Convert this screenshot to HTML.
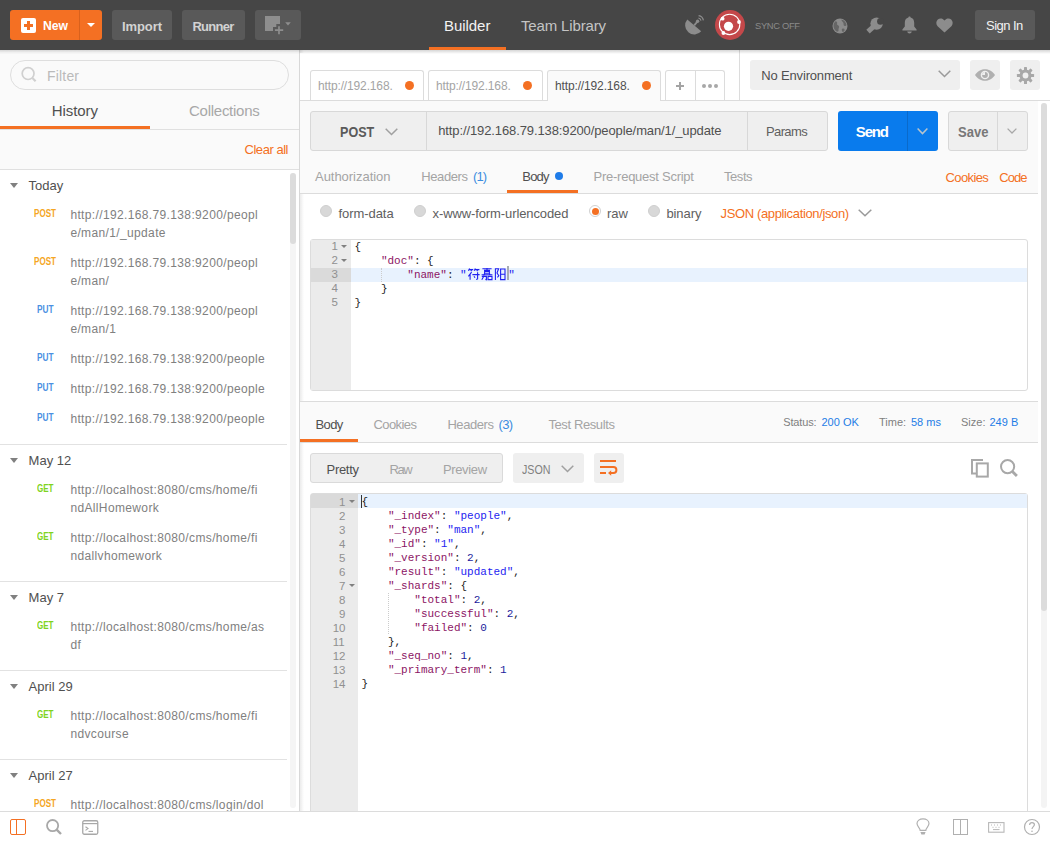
<!DOCTYPE html>
<html><head><meta charset="utf-8">
<style>
*{box-sizing:border-box;margin:0;padding:0}
html,body{width:1050px;height:842px;overflow:hidden;background:#fff}
body{position:relative;font-family:"Liberation Sans",sans-serif;color:#505050}
.a{position:absolute}
.t{position:absolute;white-space:pre;line-height:1}
svg{position:absolute;overflow:visible}
</style></head><body>
<div class="a" style="left:0px;top:0px;width:1050px;height:50px;background:#464646"></div>
<div class="a" style="left:10px;top:10px;width:92px;height:30px;background:#f47023;border-radius:3px"></div>
<div class="a" style="left:79px;top:10px;width:1px;height:30px;background:#d9611c"></div>
<div class="a" style="left:21px;top:18px;width:15px;height:15px;background:#fff;border-radius:2px"></div>
<div class="a" style="left:27.3px;top:21px;width:2.4px;height:9px;background:#f47023"></div>
<div class="a" style="left:24px;top:24.3px;width:9px;height:2.4px;background:#f47023"></div>
<div class="t" style="left:43.4px;top:19.00px;font-size:13px;color:#fff;font-weight:bold;transform:scaleX(0.935);transform-origin:0 0">New</div>
<div class="a" style="left:87px;top:23px;width:0;height:0;border-left:4px solid transparent;border-right:4px solid transparent;border-top:4px solid #fff"></div>
<div class="a" style="left:112px;top:10px;width:60px;height:30px;background:#595959;border-radius:3px"></div>
<div class="t" style="left:122.0px;top:19.60px;font-size:13px;color:#d2d2d2;font-weight:bold;letter-spacing:-0.09px">Import</div>
<div class="a" style="left:182px;top:10px;width:63px;height:30px;background:#595959;border-radius:3px"></div>
<div class="t" style="left:192.4px;top:19.60px;font-size:13px;color:#d2d2d2;font-weight:bold;letter-spacing:-0.70px">Runner</div>
<div class="a" style="left:255px;top:10px;width:46px;height:30px;background:#595959;border-radius:3px"></div>
<svg style="left:255px;top:10px" width="46" height="30" viewBox="0 0 46 30"><path d="M10 6 H25 V14 H21.3 V17 H18 V21 H10 Z" fill="#8e8e8e"/><path d="M19.9 20.2 H28.2 M24 16.2 V24.2" stroke="#8e8e8e" stroke-width="1.7"/><path d="M30.2 12.3 H35.8 L33 15.6 Z" fill="#8e8e8e"/></svg>
<div class="t" style="left:444.0px;top:18.31px;font-size:15px;color:#f2f2f2;letter-spacing:-0.05px">Builder</div>
<div class="a" style="left:429px;top:47px;width:77px;height:3px;background:#f47023"></div>
<div class="t" style="left:521.0px;top:18.31px;font-size:15px;color:#c4c4c4;letter-spacing:-0.15px">Team Library</div>
<svg style="left:686px;top:16px" width="18" height="18" viewBox="0 0 18 18">
 <path d="M1.3 3.4 L15.2 15.2 A9.1 9.1 0 0 1 1.3 3.4 Z" fill="#8c8c8c"/>
 <path d="M8.2 9.4 L11.4 5.6" stroke="#8c8c8c" stroke-width="1.8"/>
 <circle cx="11.6" cy="5.2" r="1.7" fill="#8c8c8c"/>
 <path d="M12.4 2 A3.4 3.4 0 0 1 15 4.6" stroke="#8c8c8c" stroke-width="1.2" fill="none"/>
 <path d="M12.6 -0.4 A5.8 5.8 0 0 1 17.4 4.4" stroke="#8c8c8c" stroke-width="1.2" fill="none"/>
</svg>
<svg style="left:715px;top:10px" width="30" height="30" viewBox="0 0 30 30">
 <circle cx="15" cy="15" r="15" fill="#c4484a"/>
 <circle cx="14.6" cy="14.4" r="10.2" stroke="#fff" stroke-width="1.1" fill="none"/>
 <circle cx="13.5" cy="16.3" r="4.6" fill="#fff"/>
 <circle cx="7.6" cy="8.7" r="1.9" fill="#fff"/>
 <circle cx="24" cy="12" r="1.9" fill="#fff"/>
 <circle cx="8.4" cy="23" r="1.9" fill="#fff"/>
</svg>
<div class="t" style="left:755.0px;top:21.05px;font-size:9.4px;color:#8a8a8a;letter-spacing:-0.34px">SYNC OFF</div>
<svg style="left:832px;top:18px" width="16" height="16" viewBox="0 0 16 16">
 <circle cx="8" cy="8" r="7.5" fill="#8c8c8c"/>
 <path d="M3.5 3.2 C5 3.5 5.5 4.5 5 5.8 C4.5 7 6.5 7.2 7 8.3 C7.5 9.5 6.2 10.5 6.5 12 C6.8 13.4 5.5 14 4.6 13.6 C3 12.5 1.6 10.5 1.5 8 C1.5 6 2.3 4.3 3.5 3.2Z" fill="#464646" opacity="0.55"/>
 <path d="M9.5 1.5 C9.2 2.8 10.5 3.4 11.2 4.6 C12 6 11 7.5 12.5 8 C13.5 8.3 14.2 7.6 14.5 7 C14.2 4.5 12.2 2.2 9.5 1.5Z" fill="#464646" opacity="0.55"/>
 <path d="M10 11 C10.8 10.2 12.2 10.4 12.6 11.4 C12.8 12.5 11.8 13.8 10.6 14 C10 13.2 9.4 11.8 10 11Z" fill="#464646" opacity="0.55"/>
</svg>
<svg style="left:866px;top:17px" width="18" height="17" viewBox="0 0 18 17">
 <circle cx="10.6" cy="6.6" r="6.2" fill="#8c8c8c"/>
 <path d="M10 7.4 L2 14.6" stroke="#8c8c8c" stroke-width="5"/>
 <circle cx="14.4" cy="4.4" r="3.3" fill="#464646"/>
</svg>
<svg style="left:902px;top:16px" width="15" height="18" viewBox="0 0 15 18">
 <path d="M7.5 0.5 C8.3 0.5 8.6 1 8.6 1.6 C11 2.2 12.2 4.2 12.2 6.8 L12.2 10.6 L14.6 13.6 L14.6 14.6 L0.4 14.6 L0.4 13.6 L2.8 10.6 L2.8 6.8 C2.8 4.2 4 2.2 6.4 1.6 C6.4 1 6.7 0.5 7.5 0.5Z" fill="#8c8c8c"/>
 <path d="M5.2 15.4 L9.8 15.4 C9.6 16.7 8.6 17.4 7.5 17.4 C6.4 17.4 5.4 16.7 5.2 15.4Z" fill="#8c8c8c"/>
</svg>
<svg style="left:936px;top:18px" width="17" height="15" viewBox="0 0 17 15">
 <path d="M8.5 14.6 L1.6 8.2 C-0.3 6.4 0 3.2 1.8 1.6 C3.6 0 6.6 0.1 8.5 2.6 C10.4 0.1 13.4 0 15.2 1.6 C17 3.2 17.3 6.4 15.4 8.2 Z" fill="#8c8c8c"/>
</svg>
<div class="a" style="left:975px;top:10px;width:60px;height:30px;background:#595959;border-radius:3px"></div>
<div class="t" style="left:986.0px;top:18.80px;font-size:13px;color:#f2f2f2;letter-spacing:-0.53px">Sign In</div>
<div class="a" style="left:0px;top:53px;width:299px;height:117px;background:#fafafa"></div>
<div class="a" style="left:10px;top:60px;width:279px;height:30px;border:1px solid #dedede;border-radius:15px;background:#fafafa"></div>
<svg style="left:20px;top:66px" width="18" height="18" viewBox="0 0 18 18"><circle cx="8.1" cy="7.6" r="5.9" stroke="#d0d0d0" stroke-width="1.7" fill="none"/><path d="M12.4 12 L15.6 15.2" stroke="#d0d0d0" stroke-width="2.2"/></svg>
<div class="t" style="left:47.0px;top:69.36px;font-size:14px;color:#bababa;letter-spacing:0.18px">Filter</div>
<div class="t" style="left:51.7px;top:103.11px;font-size:15px;color:#505050;letter-spacing:-0.06px">History</div>
<div class="t" style="left:189.0px;top:103.11px;font-size:15px;color:#a8a8a8;letter-spacing:-0.26px">Collections</div>
<div class="a" style="left:0px;top:129px;width:299px;height:1px;background:#e0e0e0"></div>
<div class="a" style="left:0px;top:126px;width:150px;height:3px;background:#f47023"></div>
<div class="t" style="left:244.5px;top:143.00px;font-size:13px;color:#f47023;letter-spacing:-0.46px">Clear all</div>
<div class="a" style="left:0px;top:169px;width:299px;height:1px;background:#e0e0e0"></div>
<div class="a" style="left:0;top:170px;width:299px;height:641px;overflow:hidden"><div class="a" style="left:0;top:-170px;width:299px;height:1000px">
<div class="a" style="left:10px;top:183px;width:0;height:0;border-left:4px solid transparent;border-right:4px solid transparent;border-top:5px solid #808080"></div>
<div class="t" style="left:28.6px;top:179.00px;font-size:13px;color:#505050">Today</div>
<div class="t" style="left:34.0px;top:209.47px;font-size:10.2px;color:#f5a623;font-weight:bold;transform:scaleX(0.793);transform-origin:0 0">POST</div>
<div class="t" style="left:70.4px;top:208.95px;font-size:12px;color:#808080;letter-spacing:0.36px">http://192.168.79.138:9200/peopl</div>
<div class="t" style="left:70.4px;top:226.95px;font-size:12px;color:#808080;letter-spacing:0.36px">e/man/1/_update</div>
<div class="t" style="left:34.0px;top:257.47px;font-size:10.2px;color:#f5a623;font-weight:bold;transform:scaleX(0.793);transform-origin:0 0">POST</div>
<div class="t" style="left:70.4px;top:256.95px;font-size:12px;color:#808080;letter-spacing:0.36px">http://192.168.79.138:9200/peopl</div>
<div class="t" style="left:70.4px;top:274.95px;font-size:12px;color:#808080;letter-spacing:0.36px">e/man/</div>
<div class="t" style="left:36.8px;top:305.47px;font-size:10.2px;color:#4a90e2;font-weight:bold;transform:scaleX(0.810);transform-origin:0 0">PUT</div>
<div class="t" style="left:70.4px;top:304.95px;font-size:12px;color:#808080;letter-spacing:0.36px">http://192.168.79.138:9200/peopl</div>
<div class="t" style="left:70.4px;top:322.95px;font-size:12px;color:#808080;letter-spacing:0.36px">e/man/1</div>
<div class="t" style="left:36.8px;top:353.47px;font-size:10.2px;color:#4a90e2;font-weight:bold;transform:scaleX(0.810);transform-origin:0 0">PUT</div>
<div class="t" style="left:70.4px;top:352.95px;font-size:12px;color:#808080;letter-spacing:0.36px">http://192.168.79.138:9200/people</div>
<div class="t" style="left:36.8px;top:383.47px;font-size:10.2px;color:#4a90e2;font-weight:bold;transform:scaleX(0.810);transform-origin:0 0">PUT</div>
<div class="t" style="left:70.4px;top:382.95px;font-size:12px;color:#808080;letter-spacing:0.36px">http://192.168.79.138:9200/people</div>
<div class="t" style="left:36.8px;top:413.47px;font-size:10.2px;color:#4a90e2;font-weight:bold;transform:scaleX(0.810);transform-origin:0 0">PUT</div>
<div class="t" style="left:70.4px;top:412.95px;font-size:12px;color:#808080;letter-spacing:0.36px">http://192.168.79.138:9200/people</div>
<div class="a" style="left:0px;top:444px;width:287px;height:1px;background:#e2e2e2"></div>
<div class="a" style="left:10px;top:458px;width:0;height:0;border-left:4px solid transparent;border-right:4px solid transparent;border-top:5px solid #808080"></div>
<div class="t" style="left:28.6px;top:454.00px;font-size:13px;color:#505050">May 12</div>
<div class="t" style="left:36.8px;top:484.47px;font-size:10.2px;color:#7ed321;font-weight:bold;transform:scaleX(0.788);transform-origin:0 0">GET</div>
<div class="t" style="left:70.4px;top:483.95px;font-size:12px;color:#808080;letter-spacing:0.36px">http://localhost:8080/cms/home/fi</div>
<div class="t" style="left:70.4px;top:501.95px;font-size:12px;color:#808080;letter-spacing:0.36px">ndAllHomework</div>
<div class="t" style="left:36.8px;top:532.47px;font-size:10.2px;color:#7ed321;font-weight:bold;transform:scaleX(0.788);transform-origin:0 0">GET</div>
<div class="t" style="left:70.4px;top:531.95px;font-size:12px;color:#808080;letter-spacing:0.36px">http://localhost:8080/cms/home/fi</div>
<div class="t" style="left:70.4px;top:549.95px;font-size:12px;color:#808080;letter-spacing:0.36px">ndallvhomework</div>
<div class="a" style="left:0px;top:581px;width:287px;height:1px;background:#e2e2e2"></div>
<div class="a" style="left:10px;top:595px;width:0;height:0;border-left:4px solid transparent;border-right:4px solid transparent;border-top:5px solid #808080"></div>
<div class="t" style="left:28.6px;top:591.00px;font-size:13px;color:#505050">May 7</div>
<div class="t" style="left:36.8px;top:621.47px;font-size:10.2px;color:#7ed321;font-weight:bold;transform:scaleX(0.788);transform-origin:0 0">GET</div>
<div class="t" style="left:70.4px;top:620.95px;font-size:12px;color:#808080;letter-spacing:0.36px">http://localhost:8080/cms/home/as</div>
<div class="t" style="left:70.4px;top:638.95px;font-size:12px;color:#808080;letter-spacing:0.36px">df</div>
<div class="a" style="left:0px;top:670px;width:287px;height:1px;background:#e2e2e2"></div>
<div class="a" style="left:10px;top:684px;width:0;height:0;border-left:4px solid transparent;border-right:4px solid transparent;border-top:5px solid #808080"></div>
<div class="t" style="left:28.6px;top:680.00px;font-size:13px;color:#505050">April 29</div>
<div class="t" style="left:36.8px;top:710.47px;font-size:10.2px;color:#7ed321;font-weight:bold;transform:scaleX(0.788);transform-origin:0 0">GET</div>
<div class="t" style="left:70.4px;top:709.95px;font-size:12px;color:#808080;letter-spacing:0.36px">http://localhost:8080/cms/home/fi</div>
<div class="t" style="left:70.4px;top:727.95px;font-size:12px;color:#808080;letter-spacing:0.36px">ndvcourse</div>
<div class="a" style="left:0px;top:759px;width:287px;height:1px;background:#e2e2e2"></div>
<div class="a" style="left:10px;top:773px;width:0;height:0;border-left:4px solid transparent;border-right:4px solid transparent;border-top:5px solid #808080"></div>
<div class="t" style="left:28.6px;top:769.00px;font-size:13px;color:#505050">April 27</div>
<div class="t" style="left:34.0px;top:799.47px;font-size:10.2px;color:#f5a623;font-weight:bold;transform:scaleX(0.793);transform-origin:0 0">POST</div>
<div class="t" style="left:70.4px;top:798.95px;font-size:12px;color:#808080;letter-spacing:0.36px">http://localhost:8080/cms/login/dol</div>
<div class="t" style="left:70.4px;top:816.95px;font-size:12px;color:#808080;letter-spacing:0.36px">ogin</div>
</div></div>
<div class="a" style="left:290px;top:173px;width:6px;height:635px;background:#f5f5f5;border-radius:3px"></div>
<div class="a" style="left:290px;top:173px;width:6px;height:71px;background:#dcdcdc;border-radius:3px"></div>
<div class="a" style="left:299px;top:50px;width:1px;height:762px;background:#d8d8d8"></div>
<div class="a" style="left:300px;top:50px;width:4px;height:762px;background:linear-gradient(to right,rgba(0,0,0,0.08),rgba(0,0,0,0))"></div>
<div class="a" style="left:0px;top:811px;width:1050px;height:1px;background:#dcdcdc"></div>
<div class="a" style="left:10px;top:819px;width:16px;height:16px;border:1.5px solid #f47023;border-radius:2px"></div>
<div class="a" style="left:15.5px;top:819px;width:1.5px;height:16px;background:#f47023"></div>
<svg style="left:46px;top:819px" width="17" height="17" viewBox="0 0 17 17"><circle cx="6.6" cy="6.6" r="5.6" stroke="#a8a8a8" stroke-width="1.8" fill="none"/><path d="M10.6 10.6 L15 15" stroke="#a8a8a8" stroke-width="2.4"/></svg>
<svg style="left:82px;top:820px" width="17" height="15" viewBox="0 0 17 15"><rect x="0.75" y="0.75" width="15" height="13.5" rx="1.5" stroke="#a8a8a8" stroke-width="1.3" fill="none"/><path d="M0.75 3.6 H15.75" stroke="#a8a8a8" stroke-width="1.2"/><path d="M3.5 6.8 L6 8.6 L3.5 10.4" stroke="#a8a8a8" stroke-width="1.1" fill="none"/><path d="M6.5 11.4 H11" stroke="#a8a8a8" stroke-width="1.1"/></svg>
<div class="a" style="left:300px;top:53px;width:750px;height:47px;background:#fff"></div>
<div class="a" style="left:300px;top:100px;width:750px;height:1px;background:#dcdcdc"></div>
<div class="a" style="left:310px;top:70px;width:114px;height:30px;border:1px solid #dcdcdc;border-bottom:none;border-radius:3px 3px 0 0;background:#fff"></div>
<div class="a" style="left:428px;top:70px;width:115px;height:30px;border:1px solid #dcdcdc;border-bottom:none;border-radius:3px 3px 0 0;background:#fff"></div>
<div class="a" style="left:547px;top:70px;width:114px;height:31px;border:1px solid #dcdcdc;border-bottom:none;border-radius:3px 3px 0 0;background:#fafafa"></div>
<div class="t" style="left:318.0px;top:80.25px;font-size:12px;color:#a4a4a4;letter-spacing:-0.14px">http://192.168.</div>
<div class="a" style="left:404.5px;top:81px;width:9px;height:9px;border-radius:50%;background:#f47023"></div>
<div class="t" style="left:436.0px;top:80.25px;font-size:12px;color:#a4a4a4;letter-spacing:-0.14px">http://192.168.</div>
<div class="a" style="left:522.5px;top:81px;width:9px;height:9px;border-radius:50%;background:#f47023"></div>
<div class="t" style="left:555.0px;top:80.25px;font-size:12px;color:#505050;letter-spacing:-0.14px">http://192.168.</div>
<div class="a" style="left:641.5px;top:81px;width:9px;height:9px;border-radius:50%;background:#f47023"></div>
<div class="a" style="left:665px;top:70px;width:60px;height:30px;border:1px solid #dcdcdc;border-bottom:none;border-radius:3px 3px 0 0;background:#fff"></div>
<div class="a" style="left:695px;top:70px;width:1px;height:30px;background:#dcdcdc"></div>
<div class="a" style="left:676px;top:85px;width:8px;height:2px;background:#a4a4a4"></div>
<div class="a" style="left:679px;top:82px;width:2px;height:8px;background:#a4a4a4"></div>
<div class="a" style="left:702px;top:84px;width:4px;height:4px;border-radius:50%;background:#a8a8a8"></div>
<div class="a" style="left:708px;top:84px;width:4px;height:4px;border-radius:50%;background:#a8a8a8"></div>
<div class="a" style="left:714px;top:84px;width:4px;height:4px;border-radius:50%;background:#a8a8a8"></div>
<div class="a" style="left:739px;top:50px;width:1px;height:50px;background:#dcdcdc"></div>
<div class="a" style="left:750px;top:60px;width:210px;height:30px;background:#efefef;border-radius:3px"></div>
<div class="t" style="left:761.3px;top:69.30px;font-size:13px;color:#505050;letter-spacing:-0.17px">No Environment</div>
<svg style="left:938px;top:70px" width="13" height="8" viewBox="0 0 13 8"><path d="M0.7 0.7 L6.5 6.5 L12.3 0.7" stroke="#9a9a9a" stroke-width="1.5" fill="none"/></svg>
<div class="a" style="left:970px;top:60px;width:30px;height:30px;background:#efefef;border-radius:3px"></div>
<svg style="left:975px;top:68.5px" width="20" height="12" viewBox="0 0 20 12"><path d="M0 6 C3 1.6 6.5 0.2 10 0.2 C13.5 0.2 17 1.6 20 6 C17 10.4 13.5 11.8 10 11.8 C6.5 11.8 3 10.4 0 6Z" fill="#b0b0b0"/><circle cx="10" cy="6" r="4.3" fill="#efefef"/><circle cx="10" cy="6" r="2.9" fill="#b0b0b0"/><path d="M10 6 V3.1 A2.9 2.9 0 0 0 7.1 6 Z" fill="#efefef"/></svg>
<div class="a" style="left:1010px;top:60px;width:30px;height:30px;background:#efefef;border-radius:3px"></div>
<svg style="left:1016.5px;top:66.5px" width="17" height="17" viewBox="0 0 17 17"><circle cx="8.5" cy="8.5" r="6" fill="#a8a8a8"/><rect x="7" y="-0.1" width="3" height="4" rx="0.6" transform="rotate(0 8.5 8.5)" fill="#a8a8a8"/><rect x="7" y="-0.1" width="3" height="4" rx="0.6" transform="rotate(45 8.5 8.5)" fill="#a8a8a8"/><rect x="7" y="-0.1" width="3" height="4" rx="0.6" transform="rotate(90 8.5 8.5)" fill="#a8a8a8"/><rect x="7" y="-0.1" width="3" height="4" rx="0.6" transform="rotate(135 8.5 8.5)" fill="#a8a8a8"/><rect x="7" y="-0.1" width="3" height="4" rx="0.6" transform="rotate(180 8.5 8.5)" fill="#a8a8a8"/><rect x="7" y="-0.1" width="3" height="4" rx="0.6" transform="rotate(225 8.5 8.5)" fill="#a8a8a8"/><rect x="7" y="-0.1" width="3" height="4" rx="0.6" transform="rotate(270 8.5 8.5)" fill="#a8a8a8"/><rect x="7" y="-0.1" width="3" height="4" rx="0.6" transform="rotate(315 8.5 8.5)" fill="#a8a8a8"/><circle cx="8.5" cy="8.5" r="2.9" fill="#efefef"/></svg>
<div class="a" style="left:300px;top:101px;width:738px;height:92px;background:#fafafa"></div>
<div class="a" style="left:310px;top:111px;width:518px;height:40px;border:1px solid #d8d8d8;border-radius:3px;background:#efefef"></div>
<div class="a" style="left:426px;top:112px;width:1px;height:38px;background:#d8d8d8"></div>
<div class="a" style="left:747px;top:112px;width:1px;height:38px;background:#d8d8d8"></div>
<div class="t" style="left:339.6px;top:124.83px;font-size:14.5px;color:#5a5a5a;font-weight:bold;transform:scaleX(0.866);transform-origin:0 0">POST</div>
<svg style="left:385px;top:128px" width="13" height="8" viewBox="0 0 13 8"><path d="M0.7 0.7 L6.5 6.5 L12.3 0.7" stroke="#a0a0a0" stroke-width="1.5" fill="none"/></svg>
<div class="t" style="left:438.2px;top:124.30px;font-size:13px;color:#505050;letter-spacing:-0.11px">http://192.168.79.138:9200/people/man/1/_update</div>
<div class="t" style="left:766.0px;top:125.00px;font-size:13px;color:#606060;letter-spacing:-0.62px">Params</div>
<div class="a" style="left:838px;top:111px;width:100px;height:40px;background:#097bed;border-radius:3px"></div>
<div class="a" style="left:907px;top:111px;width:1px;height:40px;background:#0a6acb"></div>
<div class="t" style="left:855.8px;top:123.71px;font-size:15px;color:#ffffff;font-weight:bold;letter-spacing:-1.16px">Send</div>
<svg style="left:917px;top:127.5px" width="11" height="7" viewBox="0 0 11 7"><path d="M0.6 0.6 L5.5 5.6 L10.4 0.6" stroke="#b8c4cc" stroke-width="1.5" fill="none"/></svg>
<div class="a" style="left:948px;top:111px;width:80px;height:40px;border:1px solid #d8d8d8;border-radius:3px;background:#efefef"></div>
<div class="a" style="left:997px;top:112px;width:1px;height:38px;background:#d8d8d8"></div>
<div class="t" style="left:957.8px;top:123.71px;font-size:15px;color:#787878;font-weight:bold;transform:scaleX(0.868);transform-origin:0 0">Save</div>
<svg style="left:1007px;top:127.5px" width="10" height="6" viewBox="0 0 10 6"><path d="M0.6 0.6 L5 5 L9.4 0.6" stroke="#a8a8a8" stroke-width="1.3" fill="none"/></svg>
<div class="t" style="left:315.0px;top:169.50px;font-size:13px;color:#a4a4a4;letter-spacing:-0.03px">Authorization</div>
<div class="t" style="left:421.3px;top:169.50px;font-size:13px;color:#a4a4a4;letter-spacing:-0.42px">Headers</div>
<div class="t" style="left:473.0px;top:169.50px;font-size:13px;color:#3a8de0;letter-spacing:-0.94px">(1)</div>
<div class="t" style="left:522.3px;top:169.50px;font-size:13px;color:#505050;letter-spacing:-0.81px">Body</div>
<div class="a" style="left:555px;top:172px;width:8px;height:8px;border-radius:50%;background:#1f7ce8"></div>
<div class="t" style="left:593.6px;top:169.50px;font-size:13px;color:#a4a4a4;letter-spacing:-0.26px">Pre-request Script</div>
<div class="t" style="left:724.0px;top:169.50px;font-size:13px;color:#a4a4a4;letter-spacing:-0.44px">Tests</div>
<div class="t" style="left:945.6px;top:171.00px;font-size:13px;color:#f47023;letter-spacing:-0.63px">Cookies</div>
<div class="t" style="left:999.3px;top:171.00px;font-size:13px;color:#f47023;letter-spacing:-0.93px">Code</div>
<div class="a" style="left:507px;top:190px;width:71px;height:3px;background:#f47023"></div>
<div class="a" style="left:300px;top:193px;width:738px;height:1px;background:#dcdcdc"></div>
<div class="a" style="left:320px;top:205px;width:12px;height:12px;border-radius:50%;background:#d8d8d8;border:1px solid #cfcfcf"></div>
<div class="t" style="left:338.4px;top:207.00px;font-size:13px;color:#606060;letter-spacing:-0.05px">form-data</div>
<div class="a" style="left:414px;top:205px;width:12px;height:12px;border-radius:50%;background:#d8d8d8;border:1px solid #cfcfcf"></div>
<div class="t" style="left:432.5px;top:207.00px;font-size:13px;color:#606060;letter-spacing:-0.10px">x-www-form-urlencoded</div>
<div class="a" style="left:589px;top:205px;width:12px;height:12px;border-radius:50%;background:#fff;border:1px solid #d0d0d0"></div>
<div class="a" style="left:591.5px;top:207.5px;width:7px;height:7px;border-radius:50%;background:#f47023"></div>
<div class="t" style="left:607.0px;top:207.00px;font-size:13px;color:#606060;letter-spacing:0.03px">raw</div>
<div class="a" style="left:648px;top:205px;width:12px;height:12px;border-radius:50%;background:#d8d8d8;border:1px solid #cfcfcf"></div>
<div class="t" style="left:666.4px;top:207.00px;font-size:13px;color:#606060;letter-spacing:-0.08px">binary</div>
<div class="t" style="left:720.5px;top:207.00px;font-size:13px;color:#f47023;letter-spacing:-0.36px">JSON (application/json)</div>
<svg style="left:858px;top:209px" width="14" height="8" viewBox="0 0 14 8"><path d="M0.7 0.7 L7 6.8 L13.3 0.7" stroke="#9a9a9a" stroke-width="1.5" fill="none"/></svg>
<div class="a" style="left:310px;top:239px;width:718px;height:152px;border:1px solid #dcdcdc;border-radius:3px;background:#fff;overflow:hidden"></div>
<div class="a" style="left:311px;top:240px;width:40px;height:150px;background:#ebebeb"></div>
<div class="a" style="left:311px;top:268px;width:40px;height:14px;background:#dadada"></div>
<div class="a" style="left:351px;top:268px;width:676px;height:14px;background:#e8f2fe"></div>
<div class="t" style="left:331.5px;top:241.07px;font-size:11.5px;color:#909090">1</div>
<div class="a" style="left:341px;top:244.8px;width:0;height:0;border-left:3px solid transparent;border-right:3px solid transparent;border-top:3.5px solid #808080"></div>
<div class="t" style="left:354.5px;top:241.67px;font-size:11px;color:#222222;font-family:'Liberation Mono',monospace">{</div>
<div class="t" style="left:331.5px;top:255.07px;font-size:11.5px;color:#909090">2</div>
<div class="a" style="left:341px;top:258.8px;width:0;height:0;border-left:3px solid transparent;border-right:3px solid transparent;border-top:3.5px solid #808080"></div>
<div class="t" style="left:354.5px;top:255.67px;font-size:11px;color:#222222;font-family:'Liberation Mono',monospace">    </div>
<div class="t" style="left:380.9px;top:255.67px;font-size:11px;color:#8c1464;font-family:'Liberation Mono',monospace">"doc"</div>
<div class="t" style="left:413.9px;top:255.67px;font-size:11px;color:#222222;font-family:'Liberation Mono',monospace">: {</div>
<div class="t" style="left:331.5px;top:269.07px;font-size:11.5px;color:#909090">3</div>
<div class="t" style="left:354.5px;top:269.67px;font-size:11px;color:#222222;font-family:'Liberation Mono',monospace">        </div>
<div class="t" style="left:407.3px;top:269.67px;font-size:11px;color:#8c1464;font-family:'Liberation Mono',monospace">"name"</div>
<div class="t" style="left:446.9px;top:269.67px;font-size:11px;color:#222222;font-family:'Liberation Mono',monospace">: </div>
<div class="t" style="left:460.1px;top:269.67px;font-size:11px;color:#2424f0;font-family:'Liberation Mono',monospace">"</div>
<svg style="left:467.8px;top:267.6px" width="12" height="12" viewBox="0 0 12 12"><path d="M1.6 0.6 L0.4 2.8 M1 1.6 H5.2 M2.8 1.6 L3.5 3.2 M7.4 0.6 L6.2 2.8 M6.8 1.6 H11.4 M8.8 1.6 L9.5 3.2 M3.6 4.2 L0.4 8.4 M2.1 6.6 V11.8 M4.4 6.6 H11.6 M9.6 4.2 V11 L8.2 11.6 M6 8.3 L7 9.8" stroke="#2020f0" stroke-width="1.1" fill="none"/></svg><svg style="left:480.9px;top:267.6px" width="12" height="12" viewBox="0 0 12 12"><path d="M1.4 0.8 H10.6 M6 0 V2.4 M3 2.2 H9 M3.6 3.4 H8.4 V5.2 H3.6 Z M0.6 6.8 H11.4 M3 5.6 L3.6 6.4 M9 5.6 L8.4 6.4 M0.8 8.4 H5.4 V11.8 L4.4 11.4 M3.2 7.6 L0.8 11.8 M7 8.4 H11 V11.6 H7 Z" stroke="#2020f0" stroke-width="1.1" fill="none"/></svg><svg style="left:494.0px;top:267.6px" width="12" height="12" viewBox="0 0 12 12"><path d="M1.4 0.3 V12 M1.4 0.8 H4.6 L3 5 L4.8 7.8 L3.4 9.4 M6.6 1 H11 V11.6 H6.6 Z M6.6 6.2 H11" stroke="#2020f0" stroke-width="1.1" fill="none"/></svg><div class="a" style="left:507.0px;top:266.4px;width:2px;height:14px;background:#a8acb4"></div>
<div class="t" style="left:508.3px;top:269.67px;font-size:11px;color:#2424f0;font-family:'Liberation Mono',monospace">"</div>
<div class="t" style="left:331.5px;top:283.07px;font-size:11.5px;color:#909090">4</div>
<div class="t" style="left:354.5px;top:283.67px;font-size:11px;color:#222222;font-family:'Liberation Mono',monospace">    }</div>
<div class="t" style="left:331.5px;top:297.07px;font-size:11.5px;color:#909090">5</div>
<div class="t" style="left:354.5px;top:297.67px;font-size:11px;color:#222222;font-family:'Liberation Mono',monospace">}</div>
<div class="a" style="left:381px;top:268px;width:0;height:14px;border-left:1px dotted #cccccc"></div>
<div class="a" style="left:300px;top:401px;width:738px;height:1px;background:#dcdcdc"></div>
<div class="a" style="left:300px;top:402px;width:738px;height:40px;background:#fafafa"></div>
<div class="a" style="left:300px;top:442px;width:738px;height:1px;background:#dcdcdc"></div>
<div class="t" style="left:315.4px;top:417.80px;font-size:13px;color:#505050;letter-spacing:-0.58px">Body</div>
<div class="a" style="left:300px;top:439px;width:58px;height:3px;background:#f47023"></div>
<div class="t" style="left:373.5px;top:417.80px;font-size:13px;color:#a4a4a4;letter-spacing:-0.59px">Cookies</div>
<div class="t" style="left:447.4px;top:417.80px;font-size:13px;color:#a4a4a4;letter-spacing:-0.42px">Headers</div>
<div class="t" style="left:498.5px;top:417.80px;font-size:13px;color:#3a8de0;letter-spacing:-0.69px">(3)</div>
<div class="t" style="left:548.4px;top:417.80px;font-size:13px;color:#a4a4a4;letter-spacing:-0.39px">Test Results</div>
<div class="t" style="left:783.3px;top:416.69px;font-size:11px;color:#808080;letter-spacing:-0.17px">Status:</div>
<div class="t" style="left:821.5px;top:416.69px;font-size:11px;color:#1e7de6">200 OK</div>
<div class="t" style="left:879.0px;top:416.69px;font-size:11px;color:#808080">Time:</div>
<div class="t" style="left:911.0px;top:416.69px;font-size:11px;color:#1e7de6">58 ms</div>
<div class="t" style="left:961.0px;top:416.69px;font-size:11px;color:#808080">Size:</div>
<div class="t" style="left:989.5px;top:416.69px;font-size:11px;color:#1e7de6">249 B</div>
<div class="a" style="left:310px;top:453px;width:193px;height:30px;border:1px solid #dadada;border-radius:3px;background:#efefef"></div>
<div class="t" style="left:326.5px;top:463.00px;font-size:13px;color:#505050;letter-spacing:-0.29px">Pretty</div>
<div class="t" style="left:389.6px;top:463.00px;font-size:13px;color:#a4a4a4;letter-spacing:-1.45px">Raw</div>
<div class="t" style="left:443.0px;top:463.00px;font-size:13px;color:#a4a4a4;letter-spacing:-0.37px">Preview</div>
<div class="a" style="left:513px;top:453px;width:71px;height:30px;background:#efefef;border-radius:3px"></div>
<div class="t" style="left:522.3px;top:463.00px;font-size:13px;color:#808080;transform:scaleX(0.822);transform-origin:0 0">JSON</div>
<svg style="left:561px;top:465px" width="13" height="8" viewBox="0 0 13 8"><path d="M0.7 0.7 L6.5 6.5 L12.3 0.7" stroke="#a0a0a0" stroke-width="1.5" fill="none"/></svg>
<div class="a" style="left:594px;top:453px;width:30px;height:30px;background:#efefef;border-radius:3px"></div>
<svg style="left:600px;top:460px" width="18" height="16" viewBox="0 0 18 16"><path d="M0 1 H16" stroke="#f47023" stroke-width="2"/><path d="M0 7 H13.4 A3 3 0 0 1 13.4 13 H10.5" stroke="#f47023" stroke-width="2" fill="none"/><path d="M8 13 L11.2 10.2 L11.2 15.8 Z" fill="#f47023"/><path d="M0 13 H6" stroke="#f47023" stroke-width="2"/></svg>
<svg style="left:971px;top:459px" width="18" height="18" viewBox="0 0 18 18"><path d="M12 1 H1 V14.5 H5" stroke="#a8a8a8" stroke-width="2" fill="none"/><rect x="5.8" y="4.4" width="11" height="13.2" stroke="#a8a8a8" stroke-width="2" fill="none"/></svg>
<svg style="left:1000px;top:459px" width="18" height="18" viewBox="0 0 18 18"><circle cx="7.6" cy="7.6" r="6.6" stroke="#a8a8a8" stroke-width="2" fill="none"/><path d="M12.4 12.4 L16.9 16.9" stroke="#a8a8a8" stroke-width="2.8"/></svg>
<div class="a" style="left:310px;top:493px;width:718px;height:330px;border:1px solid #dcdcdc;border-radius:3px;background:#fff"></div>
<div class="a" style="left:311px;top:494px;width:47px;height:317px;background:#ebebeb"></div>
<div class="a" style="left:311px;top:494px;width:47px;height:14px;background:#dadada"></div>
<div class="a" style="left:358px;top:494px;width:669px;height:14px;background:#e8f2fe"></div>
<div class="t" style="left:339.1px;top:496.57px;font-size:11.5px;color:#909090">1</div>
<div class="a" style="left:349px;top:500.3px;width:0;height:0;border-left:3px solid transparent;border-right:3px solid transparent;border-top:3.5px solid #808080"></div>
<div class="t" style="left:361.5px;top:497.17px;font-size:11px;color:#222222;font-family:'Liberation Mono',monospace">{</div>
<div class="t" style="left:339.1px;top:510.57px;font-size:11.5px;color:#909090">2</div>
<div class="t" style="left:387.9px;top:511.17px;font-size:11px;color:#8c1464;font-family:'Liberation Mono',monospace">"_index"</div>
<div class="t" style="left:440.7px;top:511.17px;font-size:11px;color:#222222;font-family:'Liberation Mono',monospace">: </div>
<div class="t" style="left:453.9px;top:511.17px;font-size:11px;color:#2424f0;font-family:'Liberation Mono',monospace">"people"</div>
<div class="t" style="left:506.7px;top:511.17px;font-size:11px;color:#222222;font-family:'Liberation Mono',monospace">,</div>
<div class="t" style="left:339.1px;top:524.57px;font-size:11.5px;color:#909090">3</div>
<div class="t" style="left:387.9px;top:525.17px;font-size:11px;color:#8c1464;font-family:'Liberation Mono',monospace">"_type"</div>
<div class="t" style="left:434.1px;top:525.17px;font-size:11px;color:#222222;font-family:'Liberation Mono',monospace">: </div>
<div class="t" style="left:447.3px;top:525.17px;font-size:11px;color:#2424f0;font-family:'Liberation Mono',monospace">"man"</div>
<div class="t" style="left:480.3px;top:525.17px;font-size:11px;color:#222222;font-family:'Liberation Mono',monospace">,</div>
<div class="t" style="left:339.1px;top:538.57px;font-size:11.5px;color:#909090">4</div>
<div class="t" style="left:387.9px;top:539.17px;font-size:11px;color:#8c1464;font-family:'Liberation Mono',monospace">"_id"</div>
<div class="t" style="left:420.9px;top:539.17px;font-size:11px;color:#222222;font-family:'Liberation Mono',monospace">: </div>
<div class="t" style="left:434.1px;top:539.17px;font-size:11px;color:#2424f0;font-family:'Liberation Mono',monospace">"1"</div>
<div class="t" style="left:453.9px;top:539.17px;font-size:11px;color:#222222;font-family:'Liberation Mono',monospace">,</div>
<div class="t" style="left:339.1px;top:552.57px;font-size:11.5px;color:#909090">5</div>
<div class="t" style="left:387.9px;top:553.17px;font-size:11px;color:#8c1464;font-family:'Liberation Mono',monospace">"_version"</div>
<div class="t" style="left:453.9px;top:553.17px;font-size:11px;color:#222222;font-family:'Liberation Mono',monospace">: </div>
<div class="t" style="left:467.1px;top:553.17px;font-size:11px;color:#1c1c9c;font-family:'Liberation Mono',monospace">2</div>
<div class="t" style="left:473.7px;top:553.17px;font-size:11px;color:#222222;font-family:'Liberation Mono',monospace">,</div>
<div class="t" style="left:339.1px;top:566.57px;font-size:11.5px;color:#909090">6</div>
<div class="t" style="left:387.9px;top:567.17px;font-size:11px;color:#8c1464;font-family:'Liberation Mono',monospace">"result"</div>
<div class="t" style="left:440.7px;top:567.17px;font-size:11px;color:#222222;font-family:'Liberation Mono',monospace">: </div>
<div class="t" style="left:453.9px;top:567.17px;font-size:11px;color:#2424f0;font-family:'Liberation Mono',monospace">"updated"</div>
<div class="t" style="left:513.3px;top:567.17px;font-size:11px;color:#222222;font-family:'Liberation Mono',monospace">,</div>
<div class="t" style="left:339.1px;top:580.57px;font-size:11.5px;color:#909090">7</div>
<div class="a" style="left:349px;top:584.3px;width:0;height:0;border-left:3px solid transparent;border-right:3px solid transparent;border-top:3.5px solid #808080"></div>
<div class="t" style="left:387.9px;top:581.17px;font-size:11px;color:#8c1464;font-family:'Liberation Mono',monospace">"_shards"</div>
<div class="t" style="left:447.3px;top:581.17px;font-size:11px;color:#222222;font-family:'Liberation Mono',monospace">: {</div>
<div class="t" style="left:339.1px;top:594.57px;font-size:11.5px;color:#909090">8</div>
<div class="t" style="left:414.3px;top:595.17px;font-size:11px;color:#8c1464;font-family:'Liberation Mono',monospace">"total"</div>
<div class="t" style="left:460.5px;top:595.17px;font-size:11px;color:#222222;font-family:'Liberation Mono',monospace">: </div>
<div class="t" style="left:473.7px;top:595.17px;font-size:11px;color:#1c1c9c;font-family:'Liberation Mono',monospace">2</div>
<div class="t" style="left:480.3px;top:595.17px;font-size:11px;color:#222222;font-family:'Liberation Mono',monospace">,</div>
<div class="t" style="left:339.1px;top:608.57px;font-size:11.5px;color:#909090">9</div>
<div class="t" style="left:414.3px;top:609.17px;font-size:11px;color:#8c1464;font-family:'Liberation Mono',monospace">"successful"</div>
<div class="t" style="left:493.5px;top:609.17px;font-size:11px;color:#222222;font-family:'Liberation Mono',monospace">: </div>
<div class="t" style="left:506.7px;top:609.17px;font-size:11px;color:#1c1c9c;font-family:'Liberation Mono',monospace">2</div>
<div class="t" style="left:513.3px;top:609.17px;font-size:11px;color:#222222;font-family:'Liberation Mono',monospace">,</div>
<div class="t" style="left:332.7px;top:622.57px;font-size:11.5px;color:#909090">10</div>
<div class="t" style="left:414.3px;top:623.17px;font-size:11px;color:#8c1464;font-family:'Liberation Mono',monospace">"failed"</div>
<div class="t" style="left:467.1px;top:623.17px;font-size:11px;color:#222222;font-family:'Liberation Mono',monospace">: </div>
<div class="t" style="left:480.3px;top:623.17px;font-size:11px;color:#1c1c9c;font-family:'Liberation Mono',monospace">0</div>
<div class="t" style="left:332.7px;top:636.57px;font-size:11.5px;color:#909090">11</div>
<div class="t" style="left:361.5px;top:637.17px;font-size:11px;color:#222222;font-family:'Liberation Mono',monospace">    },</div>
<div class="t" style="left:332.7px;top:650.57px;font-size:11.5px;color:#909090">12</div>
<div class="t" style="left:387.9px;top:651.17px;font-size:11px;color:#8c1464;font-family:'Liberation Mono',monospace">"_seq_no"</div>
<div class="t" style="left:447.3px;top:651.17px;font-size:11px;color:#222222;font-family:'Liberation Mono',monospace">: </div>
<div class="t" style="left:460.5px;top:651.17px;font-size:11px;color:#1c1c9c;font-family:'Liberation Mono',monospace">1</div>
<div class="t" style="left:467.1px;top:651.17px;font-size:11px;color:#222222;font-family:'Liberation Mono',monospace">,</div>
<div class="t" style="left:332.7px;top:664.57px;font-size:11.5px;color:#909090">13</div>
<div class="t" style="left:387.9px;top:665.17px;font-size:11px;color:#8c1464;font-family:'Liberation Mono',monospace">"_primary_term"</div>
<div class="t" style="left:486.9px;top:665.17px;font-size:11px;color:#222222;font-family:'Liberation Mono',monospace">: </div>
<div class="t" style="left:500.1px;top:665.17px;font-size:11px;color:#1c1c9c;font-family:'Liberation Mono',monospace">1</div>
<div class="t" style="left:332.7px;top:678.57px;font-size:11.5px;color:#909090">14</div>
<div class="t" style="left:361.5px;top:679.17px;font-size:11px;color:#222222;font-family:'Liberation Mono',monospace">}</div>
<div class="a" style="left:388px;top:593px;width:0;height:41px;border-left:1px dotted #cccccc"></div>
<div class="a" style="left:361px;top:495px;width:1px;height:13px;background:#333"></div>
<div class="a" style="left:300px;top:811px;width:750px;height:31px;background:#fff"></div>
<div class="a" style="left:0px;top:811px;width:1050px;height:1px;background:#dcdcdc"></div>
<div class="a" style="left:1041px;top:103px;width:6px;height:705px;background:#f4f4f4;border-radius:3px"></div>
<div class="a" style="left:1041px;top:103px;width:6px;height:508px;background:#dcdcdc;border-radius:3px"></div>
<svg style="left:915px;top:818px" width="16" height="18" viewBox="0 0 16 18"><path d="M5.2 12.4 C5.2 10 2 8.4 2 5.6 C2 2.7 4.7 0.8 8 0.8 C11.3 0.8 14 2.7 14 5.6 C14 8.4 10.8 10 10.8 12.4 Z" stroke="#b0b0b0" stroke-width="1.2" fill="none"/><path d="M5.4 14 H10.6 L9.6 16.6 H6.4 Z" fill="#b0b0b0"/></svg>
<div class="a" style="left:952.5px;top:819px;width:15.5px;height:16px;border:1.3px solid #b0b0b0"></div>
<div class="a" style="left:959.6px;top:819px;width:1.3px;height:16px;background:#b0b0b0"></div>
<svg style="left:988px;top:821.5px" width="17" height="11" viewBox="0 0 17 11"><rect x="0.6" y="0.6" width="15.4" height="9.6" stroke="#b8b8b8" stroke-width="1.1" fill="none"/><path d="M3 3 H4 M6 3 H7 M9 3 H10 M12 3 H13 M4.5 5.3 H5.5 M7.5 5.3 H8.5 M10.5 5.3 H11.5 M5 7.6 H11.5" stroke="#b8b8b8" stroke-width="1"/></svg>
<svg style="left:1024px;top:819px" width="17" height="17" viewBox="0 0 17 17"><circle cx="8" cy="8" r="7.5" stroke="#b0b0b0" stroke-width="1.2" fill="none"/><path d="M5.6 6 C5.6 4.4 6.7 3.6 8 3.6 C9.4 3.6 10.4 4.5 10.4 5.8 C10.4 7.5 8 7.8 8 10" stroke="#b0b0b0" stroke-width="1.2" fill="none"/><circle cx="8" cy="12.2" r="0.8" fill="#b0b0b0"/></svg>
<div class="a" style="left:0px;top:50px;width:1050px;height:4px;background:linear-gradient(rgba(0,0,0,0.16),rgba(0,0,0,0))"></div>
</body></html>
